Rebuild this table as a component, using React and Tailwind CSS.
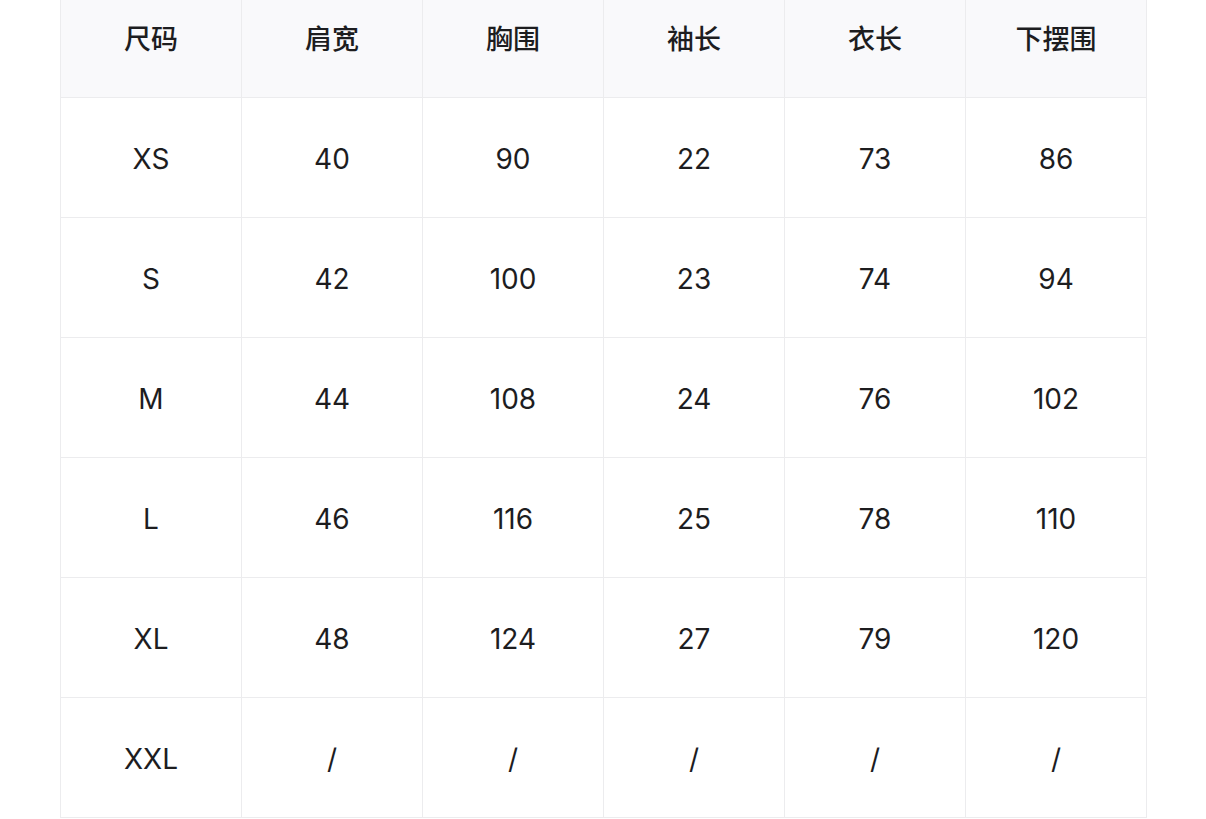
import React from 'react';

const headers = ['尺码', '肩宽', '胸围', '袖长', '衣长', '下摆围'];

const rows = [
  ['XS', '40', '90', '22', '73', '86'],
  ['S', '42', '100', '23', '74', '94'],
  ['M', '44', '108', '24', '76', '102'],
  ['L', '46', '116', '25', '78', '110'],
  ['XL', '48', '124', '27', '79', '120'],
  ['XXL', '/', '/', '/', '/', '/'],
];

const font = { fontFamily: 'Inter, "Noto Sans CJK SC", sans-serif' };

export default function App() {
  return (
    <div className="bg-white w-[1206px] h-[819px] overflow-hidden" style={font}>
      <div className="ml-[60px] w-[1087px] border-l border-[#ececee]">
        {/* header */}
        <div className="grid grid-cols-6 bg-[#f9f9fb]">
          {headers.map((h) => (
            <div
              key={h}
              className="h-[98px] flex items-center justify-center pb-[17px] border-r border-b border-[#ececee] text-[27px] font-medium text-[#1d1d1f]"
            >
              {h}
            </div>
          ))}
        </div>
        {/* body */}
        {rows.map((r) => (
          <div key={r[0]} className="grid grid-cols-6">
            {r.map((c, i) => (
              <div
                key={i}
                className="h-[120px] flex items-center justify-center pt-[2px] border-r border-b border-[#ececee] text-[28px] text-[#1d1d1f]"
              >
                {c}
              </div>
            ))}
          </div>
        ))}
      </div>
    </div>
  );
}
